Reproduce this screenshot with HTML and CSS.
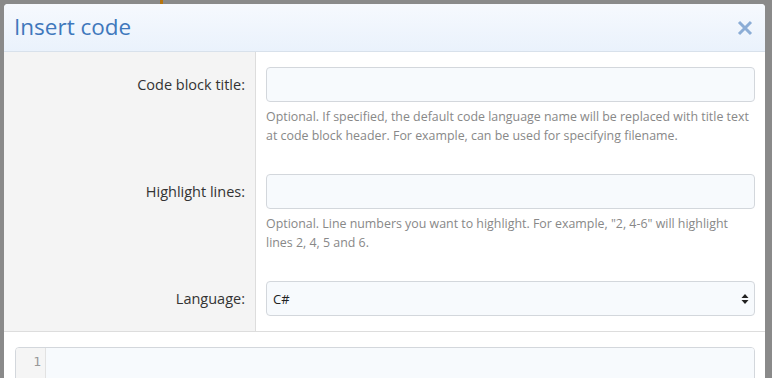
FILE: index.html
```html
<!DOCTYPE html>
<html lang="en">

<head>
    <meta charset="UTF-8">
    <meta name="viewport" content="width=device-width, initial-scale=1.0">
    <title>Insert code</title>
    <link rel="stylesheet" href="styles.css">
</head>

<body>
    <div class="modal">
        <div class="modal-header">
            <div class="modal-title">Insert code</div>
            <button class="close" aria-label="Close">
                <svg width="16" height="16" viewBox="0 0 16 16">
                    <path d="M2 2 L14 14 M14 2 L2 14" stroke="#8cadd6" stroke-width="3" fill="none" />
                </svg>
            </button>
        </div>

        <div class="form">
            <div class="form-row">
                <div class="form-label"><label for="title">Code block title:</label></div>
                <div class="form-field">
                    <input type="text" id="title" class="input-text" />
                    <div class="help">Optional. If specified, the default code language name will be replaced with title text<br>at code block header. For example, can be used for specifying filename.</div>
                </div>
            </div>
            <div class="form-row">
                <div class="form-label"><label for="lines">Highlight lines:</label></div>
                <div class="form-field">
                    <input type="text" id="lines" class="input-text" />
                    <div class="help">Optional. Line numbers you want to highlight. For example, "2, 4-6" will highlight<br>lines 2, 4, 5 and 6.</div>
                </div>
            </div>
            <div class="form-row">
                <div class="form-label"><label for="language">Language:</label></div>
                <div class="form-field">
                    <div class="select-wrap">
                        <select id="language" class="input-text">
                            <option>C#</option>
                            <option>JavaScript</option>
                            <option>Python</option>
                        </select>
                        <svg class="select-arrows" width="8" height="12" viewBox="0 0 8 12">
                            <path d="M4 1 L7.5 5 L0.5 5 Z M4 11 L7.5 7 L0.5 7 Z" fill="#222" />
                        </svg>
                    </div>
                </div>
            </div>
        </div>

        <div class="editor">
            <div class="gutter">1</div>
            <div class="code"></div>
        </div>
    </div>
</body>

</html>
```

FILE: styles.css
```css
body {
    margin: 0px;
    padding: 4px 7px 0px 4px;
    height: 378px;
    box-sizing: border-box;
    overflow: hidden;
    background: linear-gradient(to right, transparent 160px, #b8740c 160px, #b8740c 163px, transparent 163px) top left / 100% 4px no-repeat, #8a8a8a;
    font-family: "Open Sans", "Noto Sans", sans-serif;
}

.modal {
    width: 761px;
    height: 374px;
    background-color: white;
    border-radius: 4px 4px 0px 0px;
    overflow: hidden;
}

.modal-header {
    height: 47px;
    display: flex;
    align-items: center;
    justify-content: space-between;
    padding: 0px 12px 0px 10px;
    background: linear-gradient(#f6f9fe, #eaf2fc);
    border-bottom: 1px solid #d8e1eb;
}

.modal-title {
    font-size: 22.5px;
    color: #3f78bc;
    padding-bottom: 2px;
}

.close {
    border: none;
    background: none;
    padding: 0px;
    width: 16px;
    height: 16px;
    display: flex;
}

.form {
    border-bottom: 1px solid #dddddd;
}

.form-row {
    display: flex;
}

.form-label {
    width: 241px;
    flex-shrink: 0;
    padding: 15px 10px 0px 0px;
    line-height: 35px;
    text-align: right;
    font-size: 14.5px;
    color: #333333;
    background-color: #f4f4f4;
    border-right: 1px solid #dddddd;
}

.form-field {
    flex: 1;
    padding: 15px 10px 14px 10px;
}

.form-row:last-child .form-field {
    padding-bottom: 15px;
}

.input-text {
    display: block;
    width: 100%;
    height: 35px;
    box-sizing: border-box;
    border: 1px solid #d3d7dc;
    border-radius: 4px;
    background-color: #f7fafd;
    padding: 0px 6px;
    font-family: inherit;
    font-size: 13px;
    color: #222222;
}

.input-text:focus {
    outline: none;
}

select.input-text {
    -webkit-appearance: none;
    appearance: none;
}

.select-wrap {
    position: relative;
}

.select-arrows {
    position: absolute;
    right: 6px;
    top: 12px;
    pointer-events: none;
}

.help {
    margin-top: 5px;
    font-size: 12.4px;
    line-height: 19px;
    color: #888888;
    white-space: nowrap;
}

.editor {
    display: flex;
    margin: 15px 10px 0px 11px;
    height: 60px;
    border: 1px solid #d3d7dc;
    border-radius: 4px;
    overflow: hidden;
}

.gutter {
    width: 25px;
    padding: 6px 4px 0px 0px;
    text-align: right;
    font-family: "DejaVu Sans Mono", monospace;
    font-size: 13px;
    color: #999999;
    background-color: #f5f5f5;
    border-right: 1px solid #e2e2e2;
}

.code {
    flex: 1;
    background-color: #f7fafd;
}
```
